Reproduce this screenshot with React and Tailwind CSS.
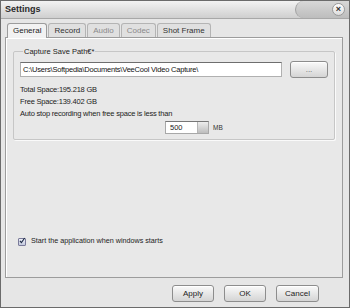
import React from "react";

const font = { fontFamily: '"Liberation Sans", Arial, sans-serif' };

const Tab = ({ label, active, dim }) => (
  <div
    className={
      "h-[14px] px-[5px] flex items-center border border-b-0 rounded-t-[3px] text-[8px] " +
      (active
        ? "bg-[#f2f2f2] border-[#9c9c9c] text-[#222] relative top-[1px] h-[15px]"
        : "bg-[#e0e0e0] border-[#b4b4b4] " + (dim ? "text-[#8a8a8a]" : "text-[#333]"))
    }
  >
    {label}
  </div>
);

const Button = ({ children, className = "" }) => (
  <button
    className={
      "h-[17px] rounded-[3px] border border-[#8d8d8d] bg-gradient-to-b from-[#fafafa] to-[#d4d4d4] text-[8px] text-[#222] shadow-[inset_0_1px_0_#fff] " +
      className
    }
  >
    {children}
  </button>
);

export default function App() {
  return (
    <div
      style={font}
      className="w-[350px] h-[308px] bg-[#e6e6e6] border border-[#6b6b6b] flex flex-col text-[#222]"
    >
      {/* title bar */}
      <div className="h-[18px] flex items-stretch justify-between bg-gradient-to-b from-[#f3f3f3] to-[#cfcfcf] border-b border-[#a8a8a8]">
        <div className="pl-[4px] flex items-center text-[9px] font-bold text-[#2a2a2a]">Settings</div>
        <div className="w-[54px] flex items-center justify-end pr-[4px] rounded-bl-[9px] rounded-tl-[9px] border-l border-[#a0a0a0] bg-gradient-to-b from-[#d8d8d8] to-[#bdbdbd]">
          <div className="w-[13px] h-[13px] rounded-full bg-gradient-to-b from-[#ffffff] to-[#dcdcdc] border border-[#9a9a9a] flex items-center justify-center text-[9px] font-bold leading-none text-[#333]">
            ×
          </div>
        </div>
      </div>

      {/* tabs */}
      <div className="flex gap-[1px] ml-[6px] mt-[3px] items-end">
        <Tab label="General" active />
        <Tab label="Record" />
        <Tab label="Audio" dim />
        <Tab label="Codec" dim />
        <Tab label="Shot Frame" />
      </div>

      {/* panel */}
      <div className="ml-[4px] mr-[6px] h-[241px] border border-[#9c9c9c] bg-[#e8e8e8] shadow-[inset_1px_1px_0_#fff] px-[7px] pt-[8px] flex flex-col">
        <fieldset className="border border-[#c6c6c6] shadow-[1px_1px_0_#fafafa] h-[94px] px-[6px] pb-[4px] rounded-[2px]">
          <legend className="ml-[3px] px-[1px] text-[7.5px] text-[#222]">Capture Save Path€*</legend>
          <div className="flex items-center mt-[4px]">
            <div className="w-[262px] h-[15px] bg-white border border-[#b0b0b0] border-t-[#6e6e6e] flex items-center pl-[2px] text-[7.5px] text-[#111] tracking-[-0.2px]">
              C:\Users\Softpedia\Documents\VeeCool Video Capture\
            </div>
            <Button className="ml-[8px] w-[38px] h-[15px] text-[#666]">...</Button>
          </div>
          <div className="mt-[6px] text-[7.5px] leading-[12px] tracking-[-0.2px]">
            <div>Total Space:195.218 GB</div>
            <div>Free Space:139.402 GB</div>
            <div>Auto stop recording when free space is less than</div>
          </div>
          <div className="flex items-center ml-[145px] mt-[1px]">
            <div className="w-[44px] h-[13px] flex border border-[#a8a8a8] border-t-[#777] bg-white">
              <div className="flex-1 pl-[4px] flex items-center text-[7.5px]">500</div>
              <div className="w-[11px] bg-gradient-to-b from-[#eeeeee] to-[#bdbdbd] border-l border-[#b5b5b5]"></div>
            </div>
            <span className="ml-[4px] text-[6.5px] text-[#333]">MB</span>
          </div>
        </fieldset>

        <div className="flex-1"></div>

        <div className="flex items-center gap-[5px] ml-[5px] mb-[30px]">
          <div className="w-[8px] h-[8px] border border-[#7a7a9a] bg-gradient-to-b from-[#eef0f8] to-[#c2c8dc] rounded-[1px] flex items-center justify-center">
            <svg viewBox="0 0 10 10" className="w-[9px] h-[9px] -mt-[2px]">
              <path d="M1.5 5.5 L4 8.5 L9.5 0.8" fill="none" stroke="#1c2a44" strokeWidth="1.8" />
            </svg>
          </div>
          <span className="text-[7.2px] text-[#222]">Start the application when windows starts</span>
        </div>
      </div>

      {/* buttons */}
      <div className="flex justify-end gap-[10px] mt-[7px] mr-[30px]">
        <Button className="w-[42px]">Apply</Button>
        <Button className="w-[42px]">OK</Button>
        <Button className="w-[43px]">Cancel</Button>
      </div>
    </div>
  );
}
